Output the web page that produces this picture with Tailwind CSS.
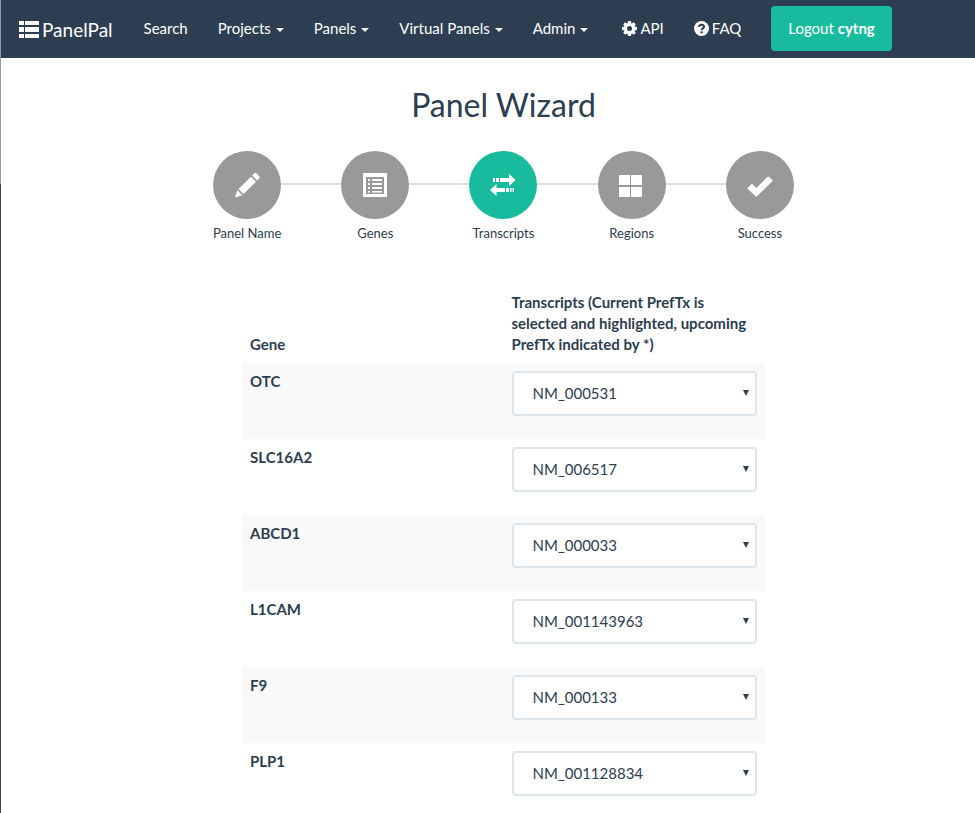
<!DOCTYPE html>
<html lang="en">
<head>
<meta charset="utf-8">
<meta name="viewport" content="width=device-width, initial-scale=1">
<title>PanelPal - Panel Wizard</title>
<script src="https://cdn.jsdelivr.net/npm/@tailwindcss/browser@4"></script>
</head>
<body class="bg-white font-['Lato',sans-serif] text-[15px] leading-[21px] text-[#2c3e50] overflow-x-hidden">
<svg class="hidden" aria-hidden="true">
  <symbol id="caret" viewBox="0 0 8 4"><path d="M0 0h8L4 4z"/></symbol>
</svg>
<div class="min-h-screen bg-linear-to-b from-[#999] from-[184px] to-[#444] to-[184px] pl-px">
<div class="min-h-screen overflow-hidden bg-white">
  <nav class="flex h-[58px] items-center bg-[#2c3e50] pl-[18px] text-white" aria-label="Main">
    <a href="#" class="mr-4 flex items-center gap-[3px] text-[19px]">
      <svg class="h-[17px] w-5" viewBox="0 0 20 17" fill="currentColor" aria-hidden="true"><path d="M0 0h5v4H0zM6 0h14v4H6zM0 6h5v5H0zM6 6h14v5H6zM0 13h5v4H0zM6 13h14v4H6z"/></svg>
      <span>PanelPal</span>
    </a>
    <ul class="flex items-center pb-px">
      <li><a href="#" class="block px-[15px] py-4">Search</a></li>
      <li><a href="#" class="flex items-center gap-[5px] px-[15px] py-4">Projects <svg class="mt-[3px] h-1 w-2" fill="currentColor" aria-hidden="true"><use href="#caret"/></svg></a></li>
      <li><a href="#" class="flex items-center gap-[5px] px-[15px] py-4">Panels <svg class="mt-[3px] h-1 w-2" fill="currentColor" aria-hidden="true"><use href="#caret"/></svg></a></li>
      <li><a href="#" class="flex items-center gap-[5px] px-[15px] py-4">Virtual Panels <svg class="mt-[3px] h-1 w-2" fill="currentColor" aria-hidden="true"><use href="#caret"/></svg></a></li>
      <li><a href="#" class="flex items-center gap-[5px] px-[15px] py-4">Admin <svg class="mt-[3px] h-1 w-2" fill="currentColor" aria-hidden="true"><use href="#caret"/></svg></a></li>
      <li class="ml-1"><a href="#" class="flex items-center gap-[3px] px-[15px] py-4">
        <svg class="size-[15px]" viewBox="0 0 15 15" aria-hidden="true"><circle cx="7.5" cy="7.5" r="4" fill="none" stroke="currentColor" stroke-width="3"/><path d="M6 0h3l.4 3H5.600zM6 15h3l.4-3H5.600zM0 6v3l3 .4V5.600zM15 6v3l-3 .4V5.600zM1.200 3.300l2.100-2.100 2.300 1.700-2.700 2.700zM13.800 3.300l-2.100-2.100-2.300 1.700 2.700 2.700zM1.200 11.700l2.100 2.100 2.300-1.700-2.700-2.700zM13.800 11.700l-2.100 2.100-2.300-1.700 2.700-2.700z" fill="currentColor"/></svg>
        API</a></li>
      <li><a href="#" class="flex items-center gap-[3px] px-[15px] py-4">
        <svg class="size-[15px]" viewBox="0 0 15 15" aria-hidden="true"><circle cx="7.500" cy="7.500" r="7.500" fill="currentColor"/><path d="M5 6C5 2.900 10 2.900 10 5.700 10 7.400 7.600 7.300 7.600 9.300" fill="none" stroke="#2c3e50" stroke-width="2"/><path d="M6.500 10.300h2.200v2H6.500z" fill="#2c3e50"/></svg>
        FAQ</a></li>
    </ul>
    <a href="#" class="mb-px ml-[15px] rounded bg-[#18bc9c] px-[17px] py-3">Logout <b>cytng</b></a>
  </nav>

  <main class="pl-[31px]">
    <h1 class="pt-[29px] text-center text-[32px] leading-[36px]">Panel Wizard</h1>

    <div class="relative mx-auto mt-7 max-w-[641px]">
      <div class="absolute inset-x-16 top-8 h-0.5 bg-[#ddd]"></div>
      <ol class="relative grid grid-cols-5 text-center text-[13px] leading-[18px]">
        <li><a href="#" class="flex flex-col items-center gap-[5px]">
          <span class="grid size-[68px] place-items-center rounded-full bg-[#999] text-white"><svg class="size-[26px]" viewBox="0 0 26 26" fill="currentColor" aria-hidden="true"><path d="M1 25.500l2.300-7.300 5 5zM4.500 17L17 4.700l5 5L9.500 22zM18.200 3.500L20.400 1.300Q21.400.3 22.400 1.300L25.300 4.200Q26.200 5.200 25.300 6.200L23.200 8.500z"/></svg></span>
          Panel Name</a></li>
        <li><a href="#" class="flex flex-col items-center gap-[5px]">
          <span class="grid size-[68px] place-items-center rounded-full bg-[#999] text-white"><svg class="h-6 w-6" viewBox="0 0 24 24" fill="currentColor" aria-hidden="true"><path fill-rule="evenodd" d="M0 0h24v24H0zM3 4v17h18V4z"/><path d="M5 6h2v2H5zM9 6h10v2H9zM5 10h2v2H5zM9 10h10v2H9zM5 14h2v2H5zM9 14h10v2H9zM5 18h2v1.500H5zM9 18h10v1.500H9z"/></svg></span>
          Genes</a></li>
        <li><a href="#" aria-current="step" class="flex flex-col items-center gap-[5px]">
          <span class="grid size-[68px] place-items-center rounded-full bg-[#18bc9c] text-white"><svg class="h-[22px] w-[26px]" viewBox="0 0 26 22" fill="currentColor" aria-hidden="true"><path d="M3 4h2v4H3zM6 4h3v4H6zM10 4h9V0l6.500 6L19 12V8h-9zM0 16l6.500-6v4H15v4H6.500v4zM16 14h3v4h-3zM20 14h1.500v4H20zM22.500 14H24v4h-1.500z"/></svg></span>
          Transcripts</a></li>
        <li><a href="#" class="flex flex-col items-center gap-[5px]">
          <span class="grid size-[68px] place-items-center rounded-full bg-[#999] text-white"><svg class="mt-0.5 mr-0.5 h-[22px] w-[23px]" viewBox="0 0 23 22" fill="currentColor" aria-hidden="true"><path d="M1 0h10v10H0V1q0-1 1-1zM12 0h10q1 0 1 1v9H12zM0 12h11v10H1q-1 0-1-1zM12 12h11v9q0 1-1 1H12z"/></svg></span>
          Regions</a></li>
        <li><a href="#" class="flex flex-col items-center gap-[5px]">
          <span class="grid size-[68px] place-items-center rounded-full bg-[#999] text-white"><svg class="mt-0.5 h-[21px] w-[26px]" viewBox="0 0 26 21" fill="currentColor" aria-hidden="true"><path d="M.8 11.800L4.300 8.300Q5 7.700 5.700 8.300L9.300 11.900 20.700.8Q21.300.200 22 .8L25.200 4Q25.800 4.700 25.200 5.400L9.900 20.300Q9.300 20.900 8.600 20.300L.8 13Q.3 12.400.8 11.800z"/></svg></span>
          Success</a></li>
      </ol>
    </div>

    <table class="mx-auto mt-[42px] w-[523px] max-w-full table-fixed text-left font-bold">
      <thead>
        <tr class="align-bottom"><th scope="col" class="p-2">Gene</th><th scope="col" class="p-2">Transcripts (Current PrefTx is selected and highlighted, upcoming PrefTx indicated by *)</th></tr>
      </thead>
      <tbody class="align-top">
        <tr class="h-[76px] odd:bg-[#f9f9f9]"><th scope="row" class="p-2"><label for="tx-otc">OTC</label></th><td class="p-2"><div class="relative"><select id="tx-otc" class="block h-[45px] w-full appearance-none rounded border-2 border-[#dce4ec] bg-white px-[19px] font-normal"><option>NM_000531</option></select><svg class="pointer-events-none absolute top-[19px] right-2 h-[6px] w-[6px]" viewBox="0 0 6 6" fill="currentColor" aria-hidden="true"><path d="M0 0h6L3 6z"/></svg></div></td></tr>
        <tr class="h-[76px] odd:bg-[#f9f9f9]"><th scope="row" class="p-2"><label for="tx-slc16a2">SLC16A2</label></th><td class="p-2"><div class="relative"><select id="tx-slc16a2" class="block h-[45px] w-full appearance-none rounded border-2 border-[#dce4ec] bg-white px-[19px] font-normal"><option>NM_006517</option></select><svg class="pointer-events-none absolute top-[19px] right-2 h-[6px] w-[6px]" viewBox="0 0 6 6" fill="currentColor" aria-hidden="true"><path d="M0 0h6L3 6z"/></svg></div></td></tr>
        <tr class="h-[76px] odd:bg-[#f9f9f9]"><th scope="row" class="p-2"><label for="tx-abcd1">ABCD1</label></th><td class="p-2"><div class="relative"><select id="tx-abcd1" class="block h-[45px] w-full appearance-none rounded border-2 border-[#dce4ec] bg-white px-[19px] font-normal"><option>NM_000033</option></select><svg class="pointer-events-none absolute top-[19px] right-2 h-[6px] w-[6px]" viewBox="0 0 6 6" fill="currentColor" aria-hidden="true"><path d="M0 0h6L3 6z"/></svg></div></td></tr>
        <tr class="h-[76px] odd:bg-[#f9f9f9]"><th scope="row" class="p-2"><label for="tx-l1cam">L1CAM</label></th><td class="p-2"><div class="relative"><select id="tx-l1cam" class="block h-[45px] w-full appearance-none rounded border-2 border-[#dce4ec] bg-white px-[19px] font-normal"><option>NM_001143963</option></select><svg class="pointer-events-none absolute top-[19px] right-2 h-[6px] w-[6px]" viewBox="0 0 6 6" fill="currentColor" aria-hidden="true"><path d="M0 0h6L3 6z"/></svg></div></td></tr>
        <tr class="h-[76px] odd:bg-[#f9f9f9]"><th scope="row" class="p-2"><label for="tx-f9">F9</label></th><td class="p-2"><div class="relative"><select id="tx-f9" class="block h-[45px] w-full appearance-none rounded border-2 border-[#dce4ec] bg-white px-[19px] font-normal"><option>NM_000133</option></select><svg class="pointer-events-none absolute top-[19px] right-2 h-[6px] w-[6px]" viewBox="0 0 6 6" fill="currentColor" aria-hidden="true"><path d="M0 0h6L3 6z"/></svg></div></td></tr>
        <tr class="h-[70px] odd:bg-[#f9f9f9]"><th scope="row" class="p-2"><label for="tx-plp1">PLP1</label></th><td class="p-2"><div class="relative"><select id="tx-plp1" class="block h-[45px] w-full appearance-none rounded border-2 border-[#dce4ec] bg-white px-[19px] font-normal"><option>NM_001128834</option></select><svg class="pointer-events-none absolute top-[19px] right-2 h-[6px] w-[6px]" viewBox="0 0 6 6" fill="currentColor" aria-hidden="true"><path d="M0 0h6L3 6z"/></svg></div></td></tr>
      </tbody>
    </table>
  </main>
</div>
</div>
</body>
</html>
